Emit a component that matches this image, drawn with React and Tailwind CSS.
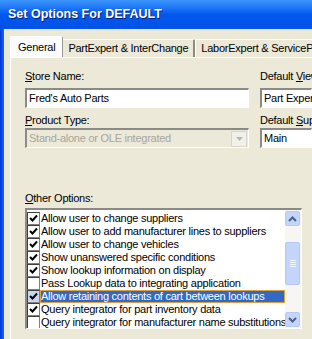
import React from "react";

const options = [
    { label: "Allow user to change suppliers", checked: true },
    { label: "Allow user to add manufacturer lines to suppliers", checked: true },
    { label: "Allow user to change vehicles", checked: true },
    { label: "Show unanswered specific conditions", checked: true },
    { label: "Show lookup information on display", checked: true },
    { label: "Pass Lookup data to integrating application", checked: false },
    { label: "Allow retaining contents of cart between lookups", checked: true, selected: true },
    { label: "Query integrator for part inventory data", checked: true },
    { label: "Query integrator for manufacturer name substitutions", checked: false },
];

const txt = "text-[11px] tracking-[-0.25px]";

function CheckBox({ checked, selected }) {
    return (
        <div
            className={`w-[13px] h-[13px] shrink-0 border border-t-[#404040] border-l-[#404040] border-b-[#808080] border-r-[#808080] ${selected ? "bg-[#c9d6ef]" : "bg-white"} flex items-center justify-center`}
        >
            {checked && (
                <svg width="9" height="9" viewBox="0 0 9 9">
                    <path d="M1 4 L3.5 6.5 L8 1.5" stroke="#000" strokeWidth="2" fill="none" />
                </svg>
            )}
        </div>
    );
}

function Label({ u, rest, pre }) {
    return (
        <div className={`${txt} leading-[13px] text-black whitespace-nowrap`}>
            {pre}
            <span className="underline">{u}</span>
            {rest}
        </div>
    );
}

function ScrollButton({ up }) {
    return (
        <div className="h-[15px] w-[15px] rounded-[2px] border border-[#b6c8f3] bg-[#c4d5fc] flex items-center justify-center">
            <svg width="9" height="6" viewBox="0 0 9 6">
                <path
                    d={up ? "M1 5 L4.5 1.5 L8 5" : "M1 1 L4.5 4.5 L8 1"}
                    stroke="#4d6185"
                    strokeWidth="2"
                    fill="none"
                />
            </svg>
        </div>
    );
}

const sunken =
    "border-t-2 border-l-2 border-t-[#8a8a86] border-l-[#8a8a86] border-b border-r border-b-white border-r-white";

export default function App() {
    return (
        <div
            className="w-[312px] h-[339px] overflow-hidden flex flex-col bg-[#ece9d8]"
            style={{ fontFamily: '"Liberation Sans", Arial, sans-serif' }}
        >
            {/* Title bar */}
            <div className="h-[29px] shrink-0 flex items-center pl-[8px] bg-gradient-to-b from-[#3d95ff] via-[#0058ee] to-[#0252e6]">
                <span className="text-white font-bold text-[12.5px] [text-shadow:1px_1px_0_#0a1e70]">
                    Set Options For DEFAULT
                </span>
            </div>

            <div className="flex flex-1 min-h-0">
                {/* Window frame */}
                <div className="w-[4px] shrink-0 bg-gradient-to-r from-[#0831d9] to-[#166aee]" />

                {/* Dialog body */}
                <div className="flex-1 min-w-0 pl-[6px] pt-[7px] flex flex-col">
                    {/* Tabs */}
                    <div className={`flex items-end h-[21px] ${txt} text-black whitespace-nowrap`}>
                        <div className="h-[21px] px-[7px] flex items-center bg-[#fcfcfe] border-l border-t border-white border-r border-r-[#9a9a96] rounded-t-[2px]">
                            General
                        </div>
                        <div className="h-[18px] px-[5px] flex items-center bg-[#ece9d8] border-t border-white border-r-2 border-r-[#8a8a86] rounded-tr-[2px]">
                            PartExpert &amp; InterChange
                        </div>
                        <div className="h-[18px] pl-[5px] flex items-center bg-[#ece9d8] border-t border-l border-white">
                            LaborExpert &amp; ServicePlus
                        </div>
                    </div>

                    {/* Tab panel */}
                    <div className="flex-1 border-l border-t border-white bg-[#ece9d8] pl-[14px] pt-[12px]">
                        <div className="flex gap-[11px]">
                            <div className="w-[224px] shrink-0 flex flex-col">
                                <Label u="S" rest="tore Name:" />
                                <div className={`mt-[5px] h-[20px] ${sunken} bg-white flex items-center px-[2px] ${txt}`}>
                                    Fred's Auto Parts
                                </div>
                                <div className="mt-[6px]">
                                    <Label u="P" rest="roduct Type:" />
                                </div>
                                <div className={`mt-[1px] h-[20px] ${sunken} bg-[#ece9d8] flex items-center pl-[2px] ${txt} text-[#a7a69d]`}>
                                    <span className="flex-1 whitespace-nowrap overflow-hidden">Stand-alone or OLE integrated</span>
                                    <div className="w-[16px] h-[16px] mr-[1px] bg-[#f2f0ea] border border-[#d8d5c8] flex items-center justify-center">
                                        <svg width="7" height="4" viewBox="0 0 7 4">
                                            <path d="M0 0 L7 0 L3.5 4 Z" fill="#b9b7ab" />
                                        </svg>
                                    </div>
                                </div>
                            </div>
                            <div className="flex-1 min-w-0 flex flex-col">
                                <Label pre="Default " u="V" rest="iew" />
                                <div className={`mt-[5px] h-[20px] ${sunken} bg-white flex items-center px-[2px] ${txt} whitespace-nowrap`}>
                                    Part Expert
                                </div>
                                <div className="mt-[6px]">
                                    <Label pre="Default " u="S" rest="upplier" />
                                </div>
                                <div className={`mt-[1px] h-[20px] ${sunken} bg-white flex items-center px-[2px] ${txt}`}>
                                    Main
                                </div>
                            </div>
                        </div>

                        <div className="mt-[44px]">
                            <Label u="O" rest="ther Options:" />
                        </div>

                        {/* Options list */}
                        <div className={`mt-[3px] w-[277px] h-[121px] ${sunken} bg-white flex`}>
                            <div className="flex-1 min-w-0 pt-[2px] overflow-hidden">
                                {options.map((o) => (
                                    <div key={o.label} className="h-[13px] flex items-center whitespace-nowrap">
                                        <CheckBox checked={o.checked} selected={o.selected} />
                                        <span
                                            className={`h-[13px] leading-[12px] ${txt} pl-[1px] pr-[4px] ${o.selected
                                                ? "bg-[#316ac5] text-white outline outline-1 outline-[#e0a040] -outline-offset-1 flex-1"
                                                : "text-black"
                                                }`}
                                        >
                                            {o.label}
                                        </span>
                                    </div>
                                ))}
                            </div>
                            <div className="w-[16px] shrink-0 bg-[#f7f6f2] flex flex-col justify-between py-[1px]">
                                <ScrollButton up />
                                <div className="flex-1 relative">
                                    <div className="absolute left-0 top-[16px] w-[15px] h-[43px] rounded-[2px] border border-[#b6c8f3] bg-[#c4d5fc] flex flex-col items-center justify-center gap-[1px]">
                                        <div className="w-[6px] h-[1px] bg-[#eef4fe]" />
                                        <div className="w-[6px] h-[1px] bg-[#eef4fe]" />
                                        <div className="w-[6px] h-[1px] bg-[#eef4fe]" />
                                        <div className="w-[6px] h-[1px] bg-[#eef4fe]" />
                                    </div>
                                </div>
                                <ScrollButton />
                            </div>
                        </div>
                    </div>
                </div>
            </div>
        </div>
    );
}
